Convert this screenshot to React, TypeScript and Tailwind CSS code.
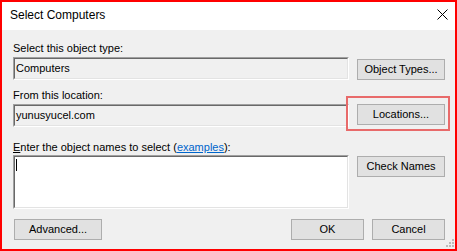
import React from "react";

const font = { fontFamily: '"Liberation Sans", Arial, sans-serif' };

function Sunken({ children, white, h }: { children?: React.ReactNode; white?: boolean; h: string }) {
  return (
    <div className={`w-[336px] ${h} border border-t-[#a0a0a0] border-l-[#a0a0a0] border-b-white border-r-white`}>
      <div
        className={`w-full h-full border border-t-[#696969] border-l-[#696969] border-b-[#e3e3e3] border-r-[#e3e3e3] ${
          white ? "bg-white" : "bg-[#f0f0f0]"
        }`}
      >
        {children}
      </div>
    </div>
  );
}

function Btn({ label, w = "w-[88px]", className = "" }: { label: string; w?: string; className?: string }) {
  return (
    <div
      className={`${w} h-[21px] bg-[#e1e1e1] border border-[#adadad] flex items-center justify-center text-[11px] leading-[13px] text-black ${className}`}
    >
      {label}
    </div>
  );
}

export default function App() {
  return (
    <div
      className="relative w-[457px] h-[251px] border-2 border-[#ff0000] bg-[#f0f0f0] flex flex-col overflow-hidden"
      style={font}
    >
      {/* Title bar */}
      <div className="h-[28px] bg-white flex items-start pl-[8px] pt-[6px] relative shrink-0">
        <span className="text-[12px] leading-[14px] text-black">Select Computers</span>
        <svg
          className="absolute left-[435px] top-[7px]"
          width="11"
          height="11"
          viewBox="0 0 11 11"
        >
          <path d="M0.5 0.5 L10.5 10.5 M10.5 0.5 L0.5 10.5" stroke="#000" strokeWidth="1" />
        </svg>
      </div>

      {/* Body */}
      <div className="flex flex-col pl-[11px] pr-[10px] pt-[12px] text-[11px] leading-[13px] text-black">
        <div className="h-[13px]">Select this object type:</div>
        <div className="flex gap-[8px] mt-[2px]">
          <Sunken h="h-[23px]">
            <div className="h-full flex items-center pl-[1px]">Computers</div>
          </Sunken>
          <Btn label="Object Types..." className="mt-[2px]" />
        </div>

        <div className="h-[13px] mt-[9px]">From this location:</div>
        <div className="flex gap-[8px] mt-[2px]">
          <Sunken h="h-[23px]">
            <div className="h-full flex items-center pl-[1px]">yunusyucel.com</div>
          </Sunken>
          <Btn label="Locations..." />
        </div>

        <div className="h-[13px] mt-[14px]">
          <span className="underline">E</span>nter the object names to select (
          <span className="text-[#0066cc] underline">examples</span>):
        </div>
        <div className="flex gap-[8px] mt-[1px]">
          <Sunken h="h-[54px]" white>
            <div className="ml-[1px] mt-[2px] w-[1px] h-[12px] bg-black" />
          </Sunken>
          <Btn label="Check Names" className="mt-[1px]" />
        </div>

        <div className="flex mt-[10px]">
          <Btn label="Advanced..." w="w-[88px]" className="ml-[1px]" />
          <div className="flex-1" />
          <Btn label="OK" w="w-[73px]" />
          <Btn label="Cancel" w="w-[73px]" className="ml-[8px]" />
        </div>
      </div>

      {/* Highlight box around Locations */}
      <div className="absolute left-[344px] top-[94px] w-[104px] h-[35px] border-2 border-[#e86a6a]" />

      {/* Size grip */}
      <div className="absolute left-[450px] top-[237px] w-[2px] h-[2px] bg-[#bcbcbc]" />
      <div className="absolute left-[447px] top-[240px] w-[2px] h-[2px] bg-[#bcbcbc]" />
      <div className="absolute left-[450px] top-[240px] w-[2px] h-[2px] bg-[#bcbcbc]" />
      <div className="absolute left-[444px] top-[243px] w-[2px] h-[2px] bg-[#bcbcbc]" />
      <div className="absolute left-[447px] top-[243px] w-[2px] h-[2px] bg-[#bcbcbc]" />
      <div className="absolute left-[450px] top-[243px] w-[2px] h-[2px] bg-[#bcbcbc]" />
    </div>
  );
}
